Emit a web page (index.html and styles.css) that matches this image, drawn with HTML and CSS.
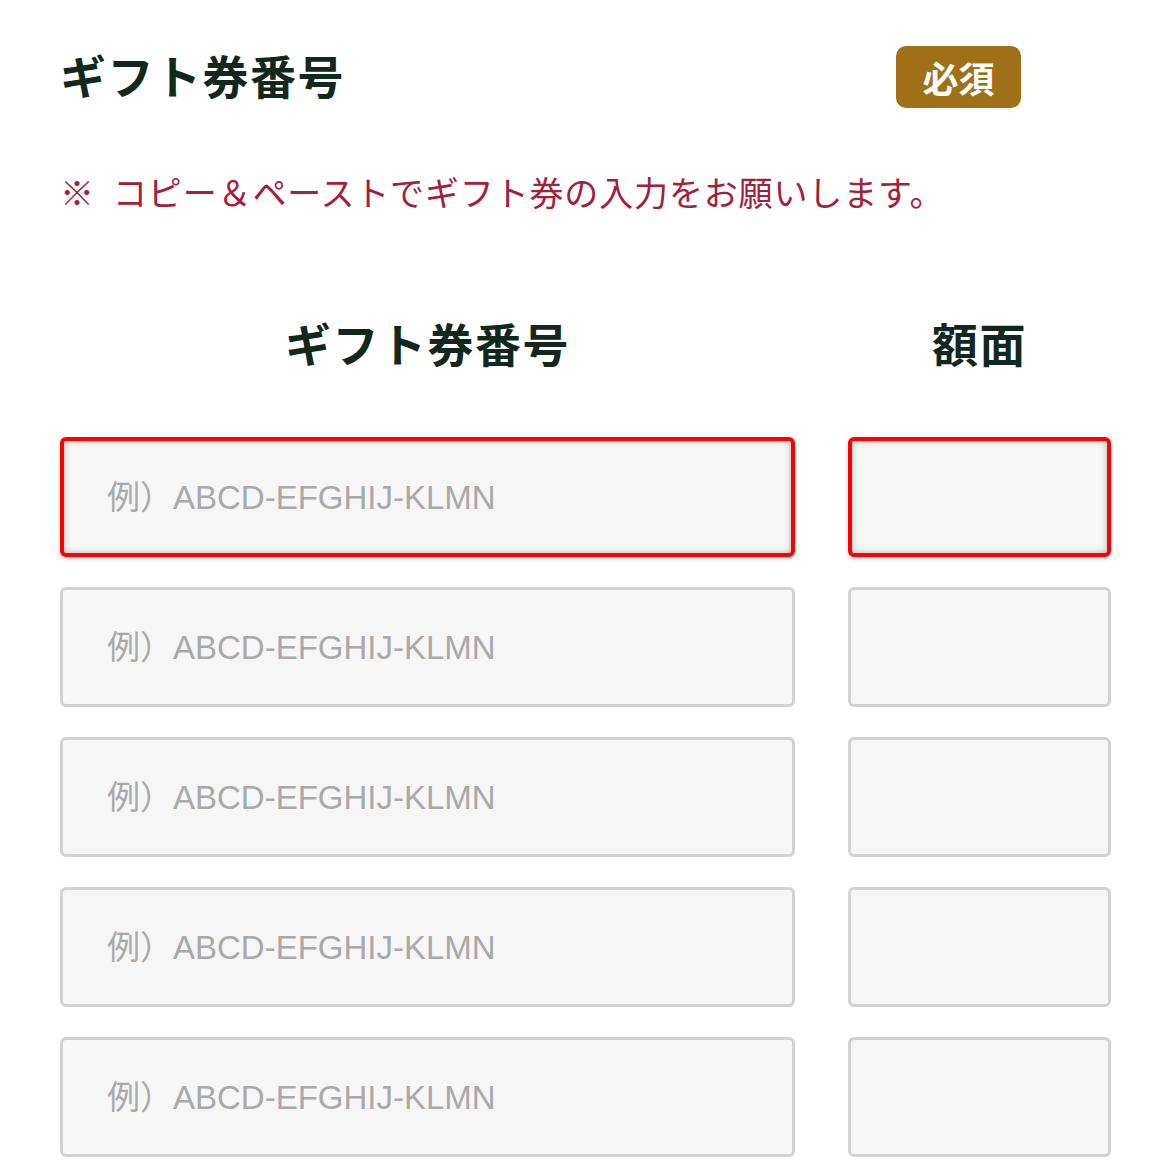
FILE: index.html
```html
<!DOCTYPE html>
<html lang="ja">
<head>
<meta charset="utf-8">
<title>ギフト券番号</title>
<link rel="stylesheet" href="styles.css">
</head>
<body>
<div class="form">
  <div class="form-head">
    <h2 class="form-title">ギフト券番号</h2>
    <span class="badge">必須</span>
  </div>
  <p class="note"><span class="note-mark">※</span>コピー＆ペーストでギフト券の入力をお願いします。</p>
  <div class="grid">
    <div class="col-head">ギフト券番号</div>
    <div class="col-head">額面</div>

    <div class="field field-error"><span class="ph">例）ABCD-EFGHIJ-KLMN</span></div>
    <div class="field field-error"></div>

    <div class="field"><span class="ph">例）ABCD-EFGHIJ-KLMN</span></div>
    <div class="field"></div>

    <div class="field"><span class="ph">例）ABCD-EFGHIJ-KLMN</span></div>
    <div class="field"></div>

    <div class="field"><span class="ph">例）ABCD-EFGHIJ-KLMN</span></div>
    <div class="field"></div>

    <div class="field"><span class="ph">例）ABCD-EFGHIJ-KLMN</span></div>
    <div class="field"></div>
  </div>
</div>
</body>
</html>
```

FILE: styles.css
```css
html, body {
  margin: 0;
  padding: 0;
  background: #ffffff;
}

body {
  font-family: "Noto Sans CJK JP", "Noto Sans", sans-serif;
}

.form {
  padding: 46px 59px 0 60px;
}

.form-head {
  display: flex;
  align-items: center;
  justify-content: space-between;
  padding-right: 90px;
  height: 62px;
}

.form-title {
  margin: -7px 0 0 0;
  font-size: 46px;
  font-weight: 700;
  line-height: 60px;
  color: #12281d;
  letter-spacing: 1.5px;
}

.badge {
  display: flex;
  align-items: center;
  justify-content: center;
  width: 125px;
  height: 62px;
  border-radius: 10px;
  background: #a07016;
  color: #ffffff;
  font-size: 36px;
  font-weight: 700;
  line-height: 1;
}

.note {
  margin: 60px 0 0 0;
  font-size: 34px;
  line-height: 48px;
  color: #a3203b;
  letter-spacing: 0.85px;
}

.note-mark {
  display: inline-block;
  width: 53px;
}

.grid {
  display: grid;
  grid-template-columns: 735px 263px;
  column-gap: 53px;
  row-gap: 30px;
  margin-top: 96px;
}

.col-head {
  text-align: center;
  font-size: 46px;
  font-weight: 700;
  line-height: 60px;
  color: #12281d;
  letter-spacing: 1.5px;
  margin-bottom: 35px;
}

.field {
  box-sizing: border-box;
  height: 120px;
  border: 3px solid #d2d2d2;
  border-radius: 6px;
  background: #f6f6f6;
  display: flex;
  align-items: center;
  padding-left: 44px;
}

.field-error {
  border: 4px solid #ff0000;
  padding-left: 43px;
  box-shadow: inset 0 0 6px rgba(0, 0, 0, 0.28), 0 2px 4px rgba(0, 0, 0, 0.18);
}

.ph {
  font-family: "Liberation Sans", "Noto Sans CJK JP", sans-serif;
  font-size: 33px;
  color: #a9a9a9;
  line-height: 1;
}
```
